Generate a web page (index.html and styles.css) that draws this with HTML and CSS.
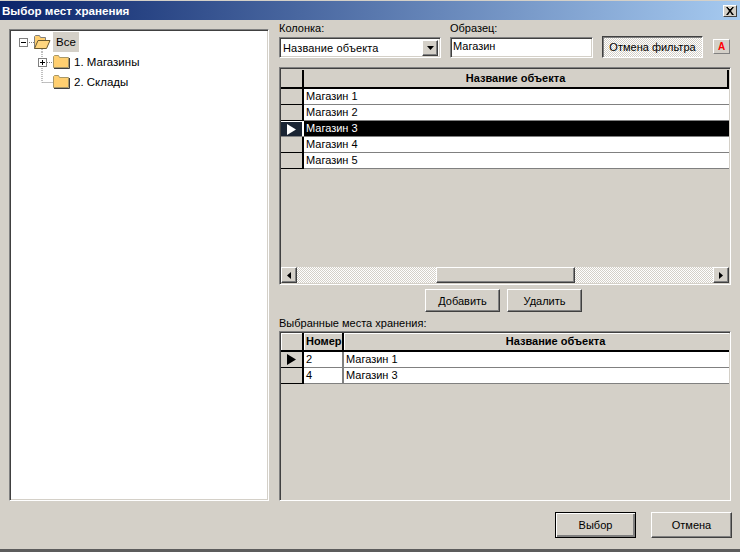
FILE: index.html
```html
<!DOCTYPE html>
<html lang="ru">
<head>
<meta charset="utf-8">
<title>Выбор мест хранения</title>
<link rel="stylesheet" href="styles.css">
</head>
<body>
<div class="window">
  <div class="titlebar">
    <span class="title">Выбор мест хранения</span>
    <button class="close"><svg width="8" height="8" viewBox="0 0 8 8"><path d="M0 0h2v1h1v1h2V1h1V0h2L5 4l3 4H6L4 5 2 8H0l3-4z" fill="#000"/></svg></button>
  </div>
  <div class="main">
    <div class="content">
      <div class="tree sunken">
        <div class="tree-row">
          <svg class="tree-art" width="62" height="20" viewBox="0 0 62 20">
            <path d="M17 10.500h5M30 17v3" class="dots"/>
            <rect x="7.500" y="6.500" width="8" height="8" fill="#fff" stroke="#808080"/>
            <path d="M9 10.500h5" stroke="#000"/>
            <path d="M22.500 16.500V4.500l1-1h4l1 2h5v3" fill="#ffcf70" stroke="#808080"/>
            <path d="M22.500 16.500l3.500-8h12l-3.500 8z" fill="#ffd67f" stroke="#6b5a30"/>
          </svg>
          <span class="tree-label selected">Все</span>
        </div>
        <div class="tree-row">
          <svg class="tree-art" width="62" height="20" viewBox="0 0 62 20">
            <path d="M30 0v7M35 10.500h6M30 14v6" class="dots"/>
            <rect x="26.500" y="6.500" width="8" height="8" fill="#fff" stroke="#808080"/>
            <path d="M28 10.500h5M30.500 8v5" stroke="#000"/>
            <path d="M41.500 15.500V4.500l1-1h4l1 2h9v10z" fill="#ffcf70" stroke="#a89868"/>
            <path d="M42 16.500h15.500V6" fill="none" stroke="#404040"/>
          </svg>
          <span class="tree-label">1. Магазины</span>
        </div>
        <div class="tree-row">
          <svg class="tree-art" width="62" height="20" viewBox="0 0 62 20">
            <path d="M30 0v10.500h11" class="dots"/>
            <path d="M41.500 15.500V4.500l1-1h4l1 2h9v10z" fill="#ffcf70" stroke="#a89868"/>
            <path d="M42 16.500h15.500V6" fill="none" stroke="#404040"/>
          </svg>
          <span class="tree-label">2. Склады</span>
        </div>
      </div>
      <div class="side">
        <div class="filters">
          <label class="field field-column">
            <span class="caption">Колонка:</span>
            <span class="select sunken-light">
              <span class="select-value">Название объекта</span>
              <span class="select-btn"><svg width="7" height="4" viewBox="0 0 7 4"><path d="M0 0h7L3.500 4z" fill="#000"/></svg></span>
            </span>
          </label>
          <label class="field field-sample">
            <span class="caption">Образец:</span>
            <span class="input sunken-light">Магазин</span>
          </label>
          <button class="btn btn-pressed">Отмена фильтра</button>
          <button class="btn btn-a">A</button>
        </div>
        <div class="grid grid-top sunken">
          <div class="row head">
            <div class="ind"></div>
            <div class="cell name">Название объекта</div>
          </div>
          <div class="row"><div class="ind"></div><div class="cell">Магазин 1</div></div>
          <div class="row"><div class="ind"></div><div class="cell">Магазин 2</div></div>
          <div class="row current">
            <div class="ind"><svg width="9" height="11" viewBox="0 0 9 11"><path d="M0 0l9 5.500L0 11z" fill="#fff"/></svg></div>
            <div class="cell">Магазин 3</div>
          </div>
          <div class="row"><div class="ind"></div><div class="cell">Магазин 4</div></div>
          <div class="row"><div class="ind"></div><div class="cell">Магазин 5</div></div>
          <div class="spacer"></div>
          <div class="scrollbar">
            <div class="sb-btn"><svg width="4" height="7" viewBox="0 0 4 7"><path d="M4 0v7L0 3.500z" fill="#000"/></svg></div>
            <div class="sb-track"></div>
            <div class="sb-thumb"></div>
            <div class="sb-track"></div>
            <div class="sb-btn"><svg width="4" height="7" viewBox="0 0 4 7"><path d="M0 0v7l4-3.500z" fill="#000"/></svg></div>
          </div>
        </div>
        <div class="actions">
          <button class="btn btn-action">Добавить</button>
          <button class="btn btn-action">Удалить</button>
        </div>
        <div class="caption caption-selected">Выбранные места хранения:</div>
        <div class="grid grid-bottom sunken">
          <div class="row head head-raised">
            <div class="ind"></div>
            <div class="cell num">Номер</div>
            <div class="cell name">Название объекта</div>
          </div>
          <div class="row">
            <div class="ind"><svg width="9" height="11" viewBox="0 0 9 11"><path d="M0 0l9 5.500L0 11z" fill="#000"/></svg></div>
            <div class="cell num">2</div><div class="cell">Магазин 1</div>
          </div>
          <div class="row">
            <div class="ind"></div>
            <div class="cell num">4</div><div class="cell">Магазин 3</div>
          </div>
        </div>
      </div>
    </div>
    <div class="footer">
      <button class="btn btn-footer btn-default">Выбор</button>
      <button class="btn btn-footer">Отмена</button>
    </div>
  </div>
</div>
</body>
</html>
```
FILE: styles.css
```css
* { box-sizing: border-box; }
html, body { margin: 0; padding: 0; }
body { font-family: "Liberation Sans", Arial, sans-serif; font-size: 11px; color: #000; background: #d4d0c8; }
button { font: inherit; color: inherit; padding: 0; margin: 0; }

.window { width: 740px; height: 552px; display: flex; flex-direction: column; background: #d4d0c8; padding-top: 1px; border-bottom: 3px solid #5c5c5c; overflow: hidden; }

.titlebar { height: 19px; flex: none; display: flex; align-items: center; justify-content: space-between; padding: 0 3px 0 2px; background: linear-gradient(to right, #0a246a, #a6caf0); }
.title { color: #fff; font-weight: bold; font-size: 11.6px; }
.close { width: 14px; height: 12px; display: flex; align-items: center; justify-content: center; background: #d4d0c8; border: 1px solid; border-color: #fff #404040 #404040 #fff; }

.main { flex: 1; min-height: 0; display: flex; flex-direction: column; padding: 0 8px 11px 9px; }
.content { flex: 1; min-height: 0; display: flex; gap: 10px; padding-right: 1px; }

.sunken { border: 1px solid; border-color: #808080 #fff #fff #808080; box-shadow: inset 1px 1px #404040, inset -1px -1px #d4d0c8; }
.sunken-light { border: 1px solid; border-color: #808080 #fff #fff #808080; box-shadow: inset 1px 1px #404040, inset -1px -1px #d4d0c8; background: #fff; }

.tree { width: 260px; flex: none; margin-top: 9px; padding: 2px; background: #fff; font-size: 11.5px; }
.tree-row { height: 20px; display: flex; align-items: stretch; }
.tree-art { flex: none; display: block; }
.dots { fill: none; stroke: #808080; stroke-dasharray: 1 1; }
.tree-label { display: flex; align-items: center; padding: 0 3px; margin-left: -3px; }
.tree-row:first-child .tree-label { margin-left: -21px; }
.selected { background: #d4d0c8; }

.side { flex: 1; min-width: 0; display: flex; flex-direction: column; padding-top: 1px; }

.filters { display: flex; align-items: flex-end; height: 37px; flex: none; }
.field { display: flex; flex-direction: column; }
.field-column { width: 162px; margin-right: 9px; }
.field-sample { width: 143px; margin-right: 9px; }
.caption { font-size: 11px; line-height: 14px; height: 16px; }
.select { height: 21px; display: flex; align-items: center; justify-content: space-between; padding: 0 2px 0 3px; font-size: 11px; letter-spacing: 0.15px; }
.select-value { padding-top: 1px; }
.select-btn { width: 16px; height: 16px; display: flex; align-items: center; justify-content: center; background: #d4d0c8; border: 1px solid; border-color: #fff #404040 #404040 #fff; box-shadow: inset -1px -1px #808080; }
.input { height: 21px; display: flex; align-items: center; padding: 0 2px 4px 2px; font-size: 11px; }

.btn { background: #d4d0c8; border: 1px solid; border-color: #fff #404040 #404040 #fff; box-shadow: inset -1px -1px #808080; font-size: 11px; display: flex; align-items: center; justify-content: center; }
.btn-pressed { width: 101px; height: 22px; border-color: #404040 #fff #fff #404040; box-shadow: inset 1px 1px #808080; background: repeating-conic-gradient(#fff 0 25%, #d4d0c8 0 50%) 0 0 / 2px 2px; }
.btn-a { width: 17px; height: 15px; margin-left: 10px; margin-bottom: 4px; color: #f00; font-weight: bold; font-size: 10px; border-color: #fff #808080 #808080 #fff; box-shadow: none; }

.grid { display: flex; flex-direction: column; padding: 2px 1px 1px 1px; font-size: 11px; background: #d4d0c8; }
.grid-top { height: 218px; flex: none; margin-top: 9px; }
.grid-bottom { flex: 1; min-height: 0; }
.row { display: flex; height: 16px; flex: none; background: #fff; border-bottom: 1px solid #808080; }
.ind { width: 23px; flex: none; background: #d4d0c8; display: flex; align-items: center; justify-content: center; border-right: 2px solid #000; box-shadow: 0 1px #000; }
.cell { flex: 1; min-width: 0; padding: 0 2px; line-height: 15px; white-space: nowrap; overflow: hidden; }
.cell.num { flex: none; width: 40px; border-right: 2px solid #808080; }
.head { height: 19px; background: #d4d0c8; border-bottom: 2px solid #000; font-weight: bold; }
.head .ind { box-shadow: none; }
.head .cell { line-height: 17px; }
.head .name { text-align: center; border-right: 2px solid #000; }
.head-raised { height: 19px; margin-top: -1px; }
.head-raised .ind, .head-raised .cell { box-shadow: inset 1px 1px #fff; }
.head-raised .cell.num { border-right: 2px solid #000; }
.head-raised .name { border-right: 0; padding-left: 40px; }
.current { background: #000; color: #fff; }
.current .ind { background: #1a2433; border-right-color: #fff; border-top: 1px solid #fff; box-shadow: none; }
.spacer { flex: 1; }
.scrollbar { height: 16px; flex: none; display: flex; }
.sb-btn { width: 16px; height: 16px; flex: none; display: flex; align-items: center; justify-content: center; background: #d4d0c8; border: 1px solid; border-color: #fff #404040 #404040 #fff; box-shadow: inset -1px -1px #808080; }
.sb-track { flex: 1; background: repeating-conic-gradient(#fff 0 25%, #d4d0c8 0 50%) 0 0 / 2px 2px; }
.sb-thumb { width: 139px; flex: none; background: #d4d0c8; border: 1px solid; border-color: #fff #404040 #404040 #fff; box-shadow: inset -1px -1px #808080; }

.actions { display: flex; justify-content: center; gap: 7px; margin-top: 4px; flex: none; padding-right: 3px; }
.btn-action { width: 75px; height: 23px; }
.caption-selected { margin-top: 4px; height: 15px; line-height: 14px; flex: none; }

.footer { display: flex; justify-content: flex-end; gap: 15px; margin-top: 11px; flex: none; }
.btn-footer { width: 81px; height: 26px; }
.btn-default { border-color: #000; box-shadow: inset 1px 1px #fff, inset -1px -1px #808080, inset -2px -2px #808080; }
```
